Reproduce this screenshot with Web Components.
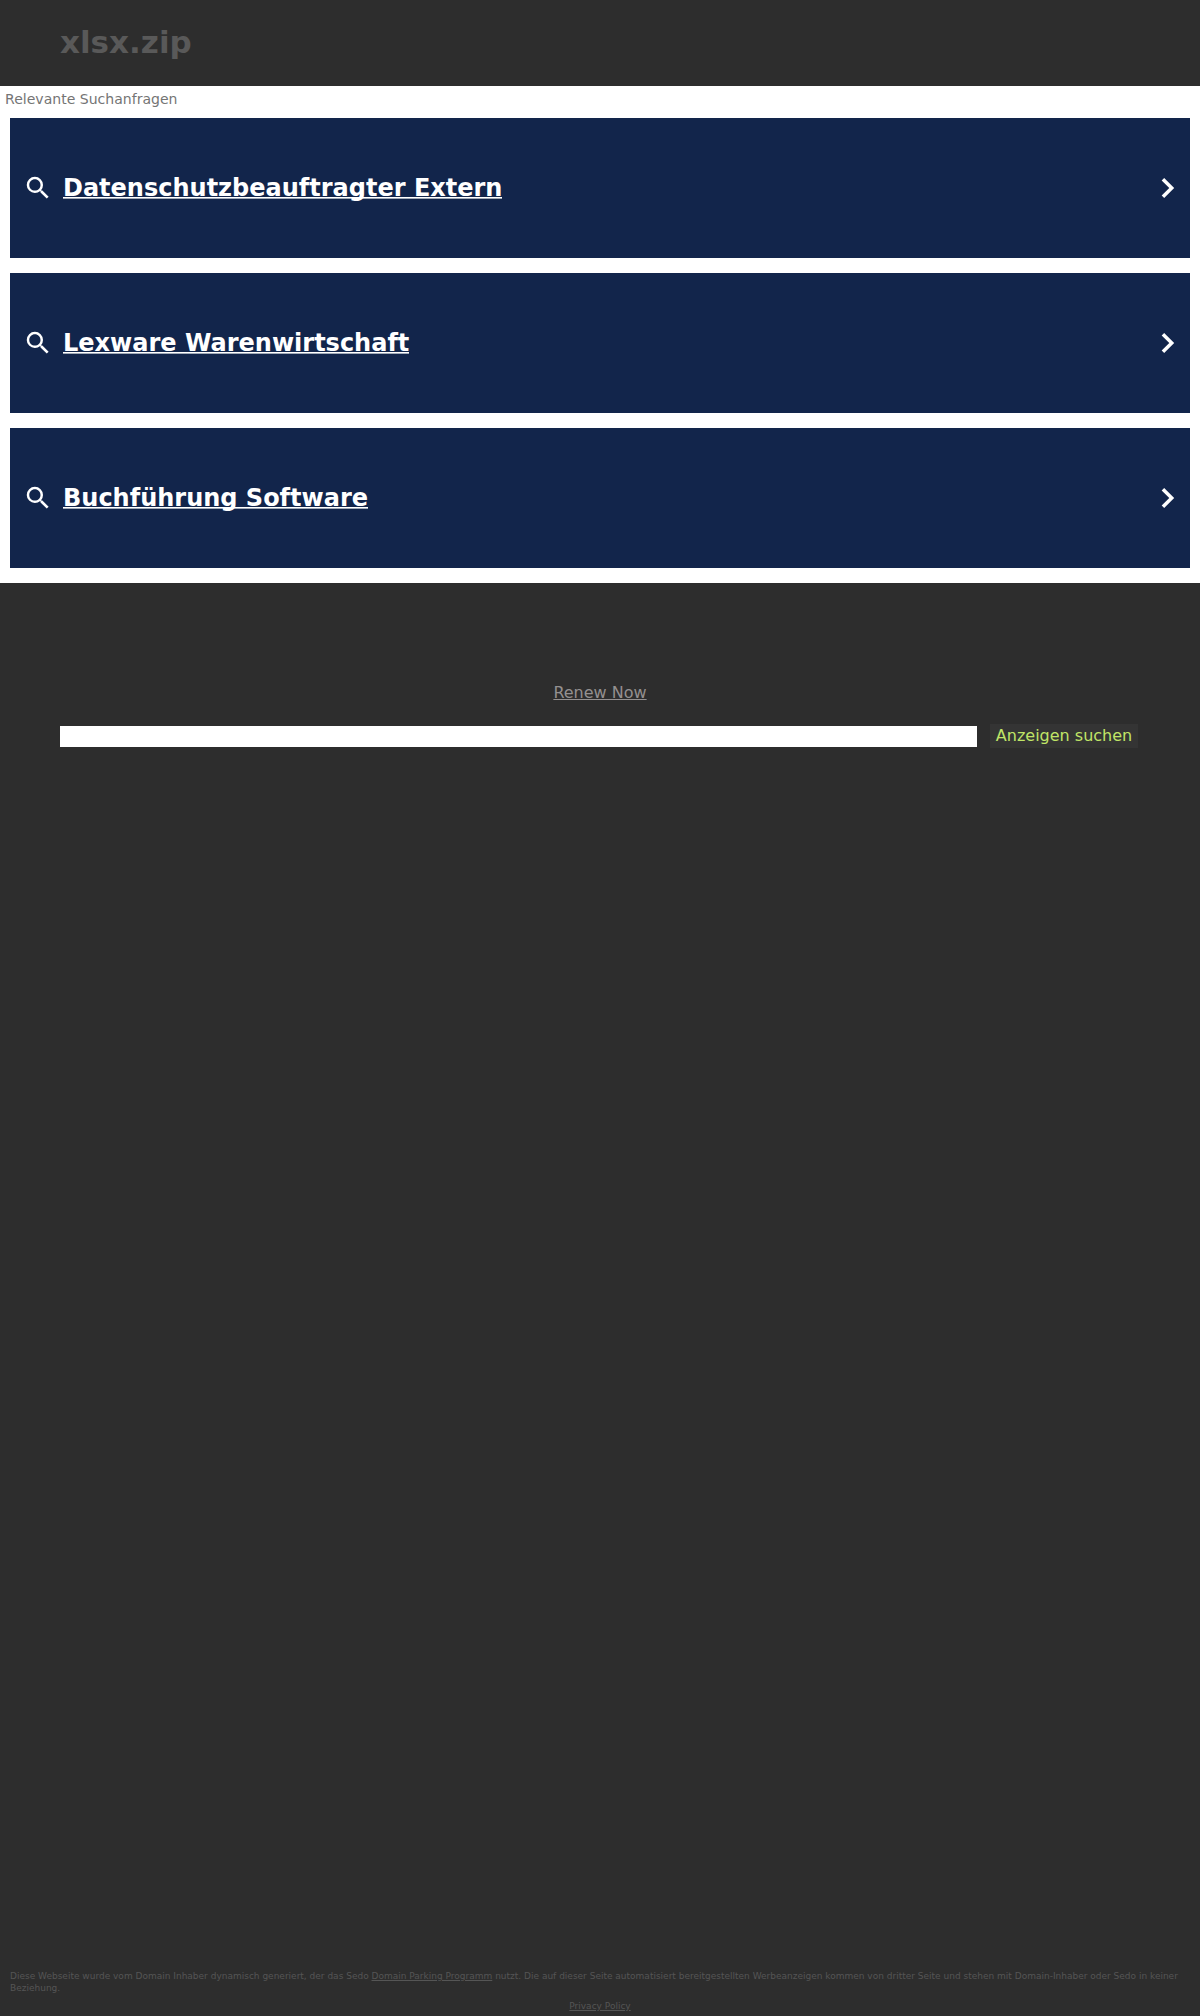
<!DOCTYPE html>
<html lang="de">
<head>
<meta charset="utf-8">
<title>xlsx.zip</title>
<style>
html,body{margin:0;padding:0;background:#2d2d2d;font-family:"DejaVu Sans",sans-serif}
</style>
</head>
<body>
<parking-page></parking-page>
<script>
const define = (name, html) => {
  const template = document.createElement('template');
  template.innerHTML = html;
  customElements.define(name, class extends HTMLElement {
    constructor() {
      super();
      this.attachShadow({mode: 'open'}).appendChild(template.content.cloneNode(true));
    }
  });
};

define('site-header', `
<style>
:host{display:block;height:86px;box-sizing:border-box;padding:24px 60px 0}
h1{margin:0;font-size:31px;line-height:37px;font-weight:bold;color:#595959}
</style>
<h1><slot></slot></h1>`);

define('search-term', `
<style>
:host{display:flex;align-items:center;height:140px;box-sizing:border-box;padding:0 2px 0 13px;background:#12254b;color:#fff}
.text{flex:1;margin-left:10px;font-size:24px;line-height:30px;font-weight:bold}
a{color:#fff;text-decoration:none;background:linear-gradient(#fff 0 1px,#a3acb9 1px 2px) 0 23px/100% 2px no-repeat}
svg{display:block;fill:#fff;flex:none}
</style>
<svg width="30" height="30" viewBox="0 0 24 24"><path d="M15.5 14h-.79l-.28-.27A6.471 6.471 0 0 0 16 9.5 6.5 6.5 0 1 0 9.5 16c1.61 0 3.09-.59 4.23-1.57l.27.28v.79l5 4.99L20.49 19l-4.99-5zm-6 0C7.01 14 5 11.99 5 9.5S7.01 5 9.5 5 14 7.01 14 9.5 11.99 14 9.5 14z"/></svg>
<div class="text"><a href="#"><slot></slot></a></div>
<svg width="40" height="40" viewBox="0 0 24 24"><path d="M9.7 6L8.2 7.45 12.77 12 8.2 16.55 9.7 18l6-6z"/></svg>`);

define('related-searches', `
<style>
:host{display:flex;flex-direction:column;height:497px;box-sizing:border-box;background:#fff}
.label{height:32px;box-sizing:border-box;padding:5px 5px 0;font-size:14.05px;line-height:16px;color:#757575}
.list{display:flex;flex-direction:column;gap:15px;padding:0 10px}
</style>
<div class="label">Relevante Suchanfragen</div>
<div class="list"><slot></slot></div>`);

define('renew-link', `
<style>
:host{display:block;text-align:center;padding-top:100px;font-size:16px;line-height:19px}
a{color:#949090}
</style>
<a href="#"><slot></slot></a>`);

define('ad-search', `
<style>
:host{display:flex;align-items:flex-start;padding:22px 62px 0 60px}
input{flex:1;min-width:0;height:21px;margin:2px 13px 0 0;padding:0;border:0;border-radius:0;background:#fff}
button{width:148px;height:24px;margin:0;padding:0;border:0;border-radius:0;background:#343434;color:#c0e567;font:16px/24px "DejaVu Sans",sans-serif;white-space:nowrap}
</style>
<input type="text" aria-label="Suche"><button><slot></slot></button>`);

define('site-footer', `
<style>
:host{display:block;margin-top:auto;padding:0 10px 4px;font-size:9.008px;line-height:12px;color:#555}
a{color:inherit}
p{margin:0}
.policy{margin-top:6px;text-align:center}
</style>
<p><slot></slot></p>
<p class="policy"><a href="#">Privacy Policy</a></p>`);

define('parking-page', `
<style>
:host{display:flex;flex-direction:column;height:2016px;background:#2d2d2d}
a{color:inherit}
</style>
<site-header>xlsx.zip</site-header>
<related-searches>
<search-term>Datenschutzbeauftragter Extern</search-term>
<search-term>Lexware Warenwirtschaft</search-term>
<search-term>Buchführung Software</search-term>
</related-searches>
<renew-link>Renew Now</renew-link>
<ad-search>Anzeigen suchen</ad-search>
<site-footer>Diese Webseite wurde vom Domain Inhaber dynamisch generiert, der das Sedo <a href="#">Domain Parking Programm</a> nutzt. Die auf dieser Seite automatisiert bereitgestellten Werbeanzeigen kommen von dritter Seite und stehen mit Domain-Inhaber oder Sedo in keiner Beziehung.</site-footer>`);
</script>
</body>
</html>
